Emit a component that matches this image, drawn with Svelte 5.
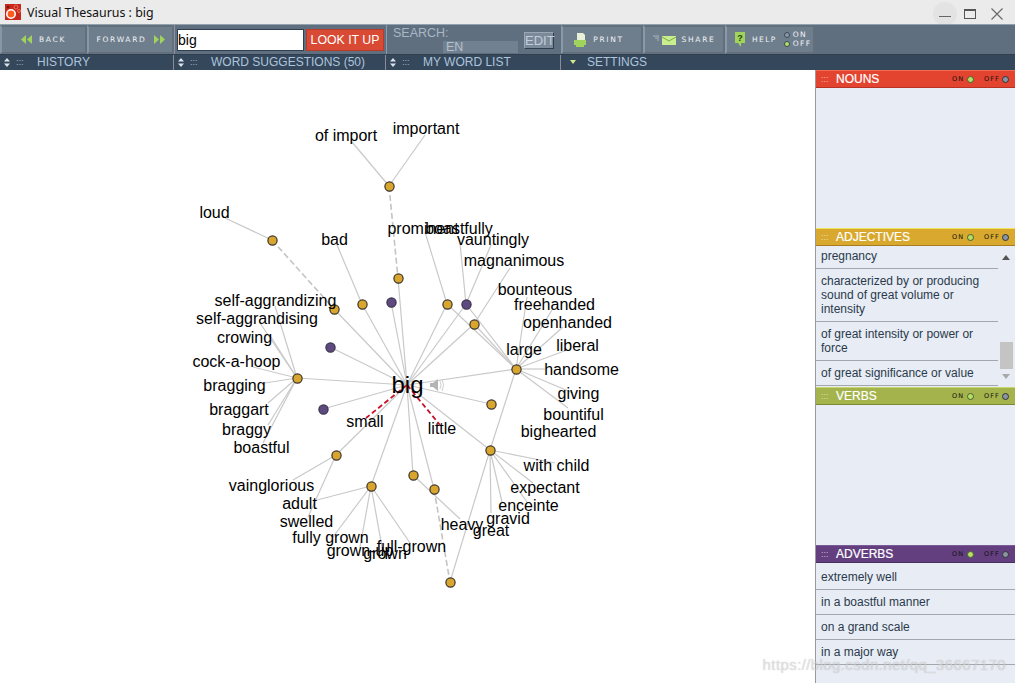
<script>
  const C = [407, 385];
  const gold = [[389,186],[272,240],[398,278],[362,304],[334,309],[447,304],[474,324],[297,378],[516,369],[491,404],[490,450],[336,455],[371,486],[413,475],[434,489],[450,582]];
  const purple = [[391,302],[466,304],[330,347],[323,409]];
  const spokes = [[398,278],[391,302],[362,304],[334,309],[447,304],[466,304],[474,324],[330,347],[297,378],[516,369],[491,404],[323,409],[490,450],[336,455],[371,486],[413,475],[434,489]];
  const links = [
    [389,186,352,142],[389,186,425,135],[272,240,225,218],[362,304,337,245],[447,304,425,232],[466,304,460,243],[466,304,491,245],
    [466,304,516,369],[447,304,516,369],[474,324,516,369],[474,324,510,268],
    [516,369,527,297],[516,369,552,310],[516,369,563,327],[516,369,567,350],[516,369,545,369],[516,369,573,393],[516,369,568,408],[516,369,490,450],
    [490,450,555,463],[490,450,533,483],[490,450,527,502],[490,450,502,502],[490,450,491,513],[490,450,450,582],
    [413,475,460,519],[297,378,275,306],[297,378,260,323],[297,378,271,337],[297,378,253,367],[297,378,265,383],[297,378,268,403],[297,378,268,425],[297,378,263,443],
    [336,455,293,480],[336,455,308,517],[371,486,317,500],[371,486,333,537],[371,486,360,547],[371,486,382,547],[371,486,410,543]
  ];
  const dashed = [[389,186,398,278],[272,240,334,309],[434,489,450,582]];
  const red = [[407,385,366,418],[407,385,440,425]];
  const words = [
    ['of import',346,141],['important',426,134],['loud',214.500,218],['bad',334.500,245],['prominent',423,234],['boastfully',459,234],
    ['vauntingly',493,245],['magnanimous',514,266],['bounteous',535,295],['freehanded',554.500,310],['openhanded',567.500,328],
    ['liberal',577.500,351],['large',524,355],['handsome',581.500,375],['giving',578.500,399],['bountiful',573.500,420],['bighearted',558.500,437],
    ['little',442,434],['small',365,427],['self-aggrandizing',275.500,306],['self-aggrandising',257,324],['crowing',244.500,343],
    ['cock-a-hoop',236.500,367],['bragging',234.500,391],['braggart',239,415],['braggy',246.500,435],['boastful',261.500,453],
    ['vainglorious',271.500,491],['adult',299.500,509],['swelled',306.500,527],['fully grown',330.500,543],['grown-up',360,556],
    ['full-grown',411.500,552],['grown',385,559],['heavy',462,530],['gravid',508,524],['great',491,536],['enceinte',528.500,511],
    ['expectant',545,493],['with child',556.500,471]
  ];
  const sections = [
    { name: 'NOUNS', cls: 'nouns', h: 'b140', items: [] },
    { name: 'ADJECTIVES', cls: 'adj', h: 'b141', scroll: true, items: ['pregnancy','characterized by or producing sound of great volume or intensity','of great intensity or power or force','of great significance or value'] },
    { name: 'VERBS', cls: 'verbs', h: 'b140', items: [] },
    { name: 'ADVERBS', cls: 'adv', h: 'b120', items: ['extremely well','in a boastful manner','on a grand scale','in a major way'] }
  ];
</script>

{#snippet sort()}
  <svg class="sort" width="6" height="9" viewBox="0 0 6 9"><path d="M3 0l3 3.500H0zM3 9L0 5.500h6z" fill="#dde4ea"/></svg>
{/snippet}

<div class="win">
  <header class="title">
    <svg class="logo" width="16" height="16" viewBox="0 0 16 16">
      <rect width="16" height="16" fill="#c8281c"/>
      <circle cx="11" cy="3" r="2" fill="none" stroke="#e8705c"/>
      <circle cx="14" cy="7" r="1.500" fill="none" stroke="#e8705c"/>
      <circle cx="3" cy="3" r="1.500" fill="#7c1410"/>
      <circle cx="6" cy="10" r="4.200" fill="#ff5a1e" stroke="#fff" stroke-width="1.600"/>
    </svg>
    <span class="ttext">Visual Thesaurus : big</span>
    <div class="winbtns">
      <span class="minwrap"><i class="minline"></i></span>
      <span class="maxbox"></span>
      <svg width="12" height="12" viewBox="0 0 12 12"><path d="M.5.5l11 11M11.500.5l-11 11" stroke="#666" stroke-width="1.100" fill="none"/></svg>
    </div>
  </header>

  <nav class="toolbar">
    <div class="seg nav">
      <button class="tbtn">
        <svg width="12" height="9" viewBox="0 0 12 9"><path d="M5 0v9L0 4.500zM11 0v9L6 4.500z" fill="#9fd35c"/></svg>
        <span class="px">BACK</span>
      </button>
      <button class="tbtn">
        <span class="px">FORWARD</span>
        <svg width="12" height="9" viewBox="0 0 12 9"><path d="M1 0v9l5-4.500zM7 0v9l5-4.500z" fill="#9fd35c"/></svg>
      </button>
    </div>
    <div class="seg lookup">
      <div class="input">big</div>
      <div class="look">LOOK IT UP</div>
    </div>
    <div class="seg search">
      <div class="slabel">SEARCH:</div>
      <div class="lang">EN</div>
      <div class="edit">EDIT</div>
    </div>
    <button class="tbtn act print">
      <svg width="14" height="14" viewBox="0 0 14 14"><path d="M4 0h6l2 2v6H4z" fill="#e8f0d8"/><path d="M1 7h12v5h-2v2H3v-2H1z" fill="#9fd35c"/></svg>
      <span class="px">PRINT</span>
    </button>
    <button class="tbtn act">
      <svg width="23" height="10" viewBox="0 0 23 10"><path d="M0 1h6M2 3h4M4 5h2" stroke="#a8b4be" fill="none"/><rect x="9" y="1" width="14" height="9" fill="#c8ee90"/><path d="M9 2l7 4 7-4" stroke="#7faa48" fill="none"/></svg>
      <span class="px">SHARE</span>
    </button>
    <button class="tbtn act help">
      <svg width="10" height="15" viewBox="0 0 10 15"><path d="M0 0h10v11H6v4l-3-4H0z" fill="#9fd35c"/><text x="5" y="9" class="qm">?</text></svg>
      <span class="px">HELP</span>
      <span class="onoff">
        <span class="ooline"><i class="dot dim"></i><span class="px">ON</span></span>
        <span class="ooline"><i class="dot lit"></i><span class="px">OFF</span></span>
      </span>
    </button>
    <div class="fill"></div>
  </nav>

  <div class="tabs">
    <div class="tab t1">{@render sort()}<span class="grip">:::</span><span class="tl">HISTORY</span></div>
    <div class="tab t2">{@render sort()}<span class="grip">:::</span><span class="tl">WORD SUGGESTIONS (50)</span></div>
    <div class="tab t3">{@render sort()}<span class="grip">:::</span><span class="tl">MY WORD LIST</span></div>
    <div class="tab t4"><span class="tri"></span><span class="tl">SETTINGS</span></div>
  </div>

  <main class="main">
    <svg class="graph" width="815" height="613" viewBox="0 70 815 613">
      <g class="edges">
        {#each spokes as s}<line x1={C[0]} y1={C[1]} x2={s[0]} y2={s[1]}/>{/each}
        {#each links as l}<line x1={l[0]} y1={l[1]} x2={l[2]} y2={l[3]}/>{/each}
      </g>
      <g class="dash">
        {#each dashed as l}<line x1={l[0]} y1={l[1]} x2={l[2]} y2={l[3]}/>{/each}
      </g>
      <g class="red">
        {#each red as l}<line x1={l[0]} y1={l[1]} x2={l[2]} y2={l[3]}/>{/each}
      </g>
      {#each gold as n}<circle class="ng" cx={n[0] + 0.5} cy={n[1] + 0.5} r="4.600"/>{/each}
      {#each purple as n}<circle class="np" cx={n[0] + 0.5} cy={n[1] + 0.5} r="4.600"/>{/each}
      <g class="speaker">
        <path d="M430 383h3l5-4v12l-5-4h-3z" fill="#b4b4b4"/>
        <path d="M440 381q2 4 0 8M442 379q3 6 0 12" fill="none" stroke="#d0d0d0"/>
      </g>
      {#each words as w}<text class="w" x={w[1]} y={w[2]}>{w[0]}</text>{/each}
      <text class="w center" x="407.500" y="393">big</text>
    </svg>

    <aside class="side">
      {#each sections as s}
        <div class="shead {s.cls}">
          <span class="sgrip">:::</span>
          <span class="sname">{s.name}</span>
          <span class="px2 on">ON</span><i class="dot lit2"></i>
          <span class="px2 off">OFF</span><i class="dot off2"></i>
        </div>
        <div class="sbody {s.h}">
          {#if s.items.length}
            <ul class="list" class:toplist={s.scroll}>
              {#each s.items as it}<li>{it}</li>{/each}
            </ul>
          {/if}
          {#if s.scroll}
            <div class="sbar">
              <i class="up"></i>
              <i class="thumb"></i>
              <i class="down"></i>
            </div>
          {/if}
        </div>
      {/each}
    </aside>
  </main>
  <div class="wm">https://blog.csdn.net/qq_36667170</div>
</div>

<style>
  :global(body) { margin: 0; background: #fff; }
  .win { width: 1015px; height: 683px; position: relative; overflow: hidden; font-family: "Liberation Sans", sans-serif; display: flex; flex-direction: column; }
  .title { height: 24px; background: #ebebeb; display: flex; align-items: center; padding-left: 5px; box-sizing: border-box; flex: none; }
  .logo { margin-right: 6px; flex: none; }
  .ttext { font: 12.400px "Noto Sans", sans-serif; color: #111; }
  .winbtns { margin-left: auto; display: flex; align-items: center; width: 82px; box-sizing: border-box; height: 24px; }
  .minwrap { width: 24px; height: 24px; border-radius: 50%; background: #e3e3e3; display: flex; align-items: center; justify-content: center; margin: 3px 7px 0 0; flex: none; }
  .minline { display: block; width: 12px; height: 1px; background: #666; margin-top: 5px; }
  .maxbox { width: 10px; height: 7px; border: 1px solid #555; border-top-width: 2px; margin: 3px 15px 0 0; flex: none; }
  .winbtns svg { margin-top: 3px; flex: none; }

  .toolbar { height: 31px; background: #5f6f7f; border-top: 1px solid #93a0ae; border-bottom: 1px solid #2f3f50; box-sizing: border-box; display: flex; flex: none; }
  .seg { box-sizing: border-box; height: 100%; display: flex; flex: none; }
  .nav { width: 174px; }
  .tbtn { width: 87px; height: 100%; flex: none; background: #6f7e8d; border: 2px solid #62707e; border-left-color: #8896a5; box-sizing: border-box; padding: 0; display: flex; align-items: center; justify-content: center; gap: 6px; font: inherit; }
  .px { font: 7.500px "DejaVu Sans", sans-serif; letter-spacing: 1.700px; color: #eef2f5; line-height: 8px; }
  .lookup { width: 212px; align-items: center; padding-left: 2px; gap: 2px; border-left: 1px solid #8f8f9f; }
  .input { width: 127px; height: 22px; background: #fff; border: 1px solid #2f3f50; box-sizing: border-box; font-size: 14px; line-height: 20px; color: #000; }
  .look { width: 78px; height: 22px; background: #d84a34; border: 1px solid #b83a28; box-sizing: border-box; color: #fff; font-size: 12.300px; line-height: 20px; text-align: center; white-space: nowrap; }
  .search { width: 175px; position: relative; border-left: 1px solid #8f9aa8; }
  .slabel { color: #aab6c4; font-size: 12.500px; padding: 1px 0 0 6px; line-height: 15px; }
  .lang { position: absolute; left: 56px; top: 16px; width: 75px; height: 12px; background: #728192; color: #b4c0cc; font-size: 12.500px; line-height: 13px; padding-left: 3px; box-sizing: border-box; }
  .edit { position: absolute; left: 137px; top: 7px; width: 30px; height: 17px; background: #7b8a9b; border: 1px solid #2f3f50; border-left-color: #9aa6b4; border-top-color: #9aa6b4; box-sizing: border-box; color: #c4ced8; font-size: 13px; line-height: 15px; text-align: center; }
  .act { width: 82px; border-left: 2px solid #8a98a8; }
  .print { padding-right: 7px; }
  .help { width: 90px; gap: 7px; justify-content: flex-start; padding-left: 8px; }
  .help .px { letter-spacing: 1.400px; }
  .qm { font: bold 9px "Liberation Sans", sans-serif; text-anchor: middle; fill: #23400f; }
  .onoff { display: flex; flex-direction: column; gap: 1px; margin-left: 0; }
  .ooline { display: flex; align-items: center; gap: 3px; }
  .dot { display: block; width: 6px; height: 6px; border-radius: 50%; flex: none; box-sizing: border-box; }
  .dim { background: #8a98a4; border: 1px solid #38485a; }
  .lit { background: #b4e060; border: 1px solid #38485a; }
  .fill { flex: 1; }

  .tabs { height: 15px; background: #34475b; display: flex; flex: none; color: #aec4dc; font-size: 12px; line-height: 14px; }
  .tab { display: flex; align-items: center; box-sizing: border-box; height: 100%; padding-bottom: 1px; position: relative; border-right: 1px solid #8b8b9c; flex: none; }
  .t1 { width: 174px; }
  .t2 { width: 212px; }
  .t3 { width: 175px; }
  .t4 { flex: 1; border: 0; }
  .sort { margin-left: 4px; flex: none; }
  .grip { font-size: 9px; color: #a8b4c2; margin-left: 6px; width: 9px; flex: none; }
  .t1 .tl { margin-left: 12px; }
  .t2 .tl { margin-left: 12px; }
  .t3 .tl { margin-left: 12px; }
  .tri { width: 0; height: 0; border: 3px solid transparent; border-top: 4px solid #cfe890; margin: 3px 0 0 9px; flex: none; }
  .t4 .tl { margin-left: 11px; }

  .main { flex: 1; display: flex; min-height: 0; }
  .graph { width: 815px; flex: none; display: block; background: #fff; }
  .edges line { stroke: #c9c9c9; stroke-width: 1.200; }
  .dash line { stroke: #c4c4c4; stroke-width: 1.600; stroke-dasharray: 6 3; }
  .red line { stroke: #c8102a; stroke-width: 1.800; stroke-dasharray: 5 3; }
  .ng { fill: #d8a62e; stroke: #3a3228; stroke-width: 1.200; }
  .np { fill: #5f4a80; stroke: #38304a; stroke-width: 1.200; }
  .w { font: 16px "Liberation Sans", sans-serif; text-anchor: middle; fill: #000; }
  .center { font-size: 24px; }

  .side { width: 200px; flex: none; background: #e8ecf4; border-left: 1px solid #9a9a9a; box-sizing: border-box; display: flex; flex-direction: column; }
  .shead { height: 18px; flex: none; display: flex; align-items: center; box-sizing: border-box; color: #fff; font-size: 12px; font-weight: 400; -webkit-text-stroke: 0.200px #fff; position: relative; }
  .nouns { background: #e24430; border-top: 1px solid #f46a50; border-bottom: 1px solid #b83224; }
  .adj { background: #d8a92e; border-top: 1px solid #f0e060; border-bottom: 1px solid #a87c20; }
  .verbs { background: #a4b34c; border-top: 1px solid #c8d870; border-bottom: 1px solid #7c8a34; }
  .adv { background: #643f80; border-top: 1px solid #7c5a98; border-bottom: 1px solid #48305c; }
  .sgrip { font-size: 9px; width: 20px; padding-left: 5px; box-sizing: border-box; opacity: .6; -webkit-text-stroke: 0; flex: none; }
  .sname { width: 116px; flex: none; }
  .px2 { font: 6.500px "DejaVu Sans", sans-serif; letter-spacing: 1.100px; color: #111; -webkit-text-stroke: 0; flex: none; }
  .on { width: 15px; }
  .off { width: 18px; margin-left: 10px; }
  .lit2 { width: 7px; height: 7px; background: #b8e060; border: 1px solid #44603a; }
  .off2 { width: 7px; height: 7px; background: #8a94a4; border: 1px solid #333; }
  .b140 { height: 140px; } .b141 { height: 141px; }
  .sbody { display: flex; overflow: hidden; flex: none; }
  .b120 { flex: 1; }
  .list { list-style: none; margin: 0; padding: 2px 0 0; width: 100%; font-size: 12px; line-height: 14px; color: #2a3a4c; }
  .list li { padding: 5px; border-bottom: 1px solid #a4a8ac; }
  .toplist { padding: 0; width: 182px; flex: none; }
  .toplist li:first-child { padding-top: 3px; }
  .sbar { width: 17px; flex: none; position: relative; background: #e8ecf4; }
  .sbar i { position: absolute; display: block; }
  .up { left: 4px; top: 9px; border: 4px solid transparent; border-top: 0; border-bottom: 5px solid #555; width: 0; height: 0; }
  .down { left: 4px; top: 128px; border: 4px solid transparent; border-bottom: 0; border-top: 5px solid #a8a8a8; width: 0; height: 0; }
  .thumb { left: 2px; top: 96px; width: 13px; height: 27px; background: #c4c4c4; }
  .wm { position: absolute; right: 9px; top: 656px; font-size: 15px; line-height: 18px; letter-spacing: .4px; color: rgba(255,255,255,.5); text-shadow: 0 0 1px rgba(90,90,90,.45); pointer-events: none; }
</style>
